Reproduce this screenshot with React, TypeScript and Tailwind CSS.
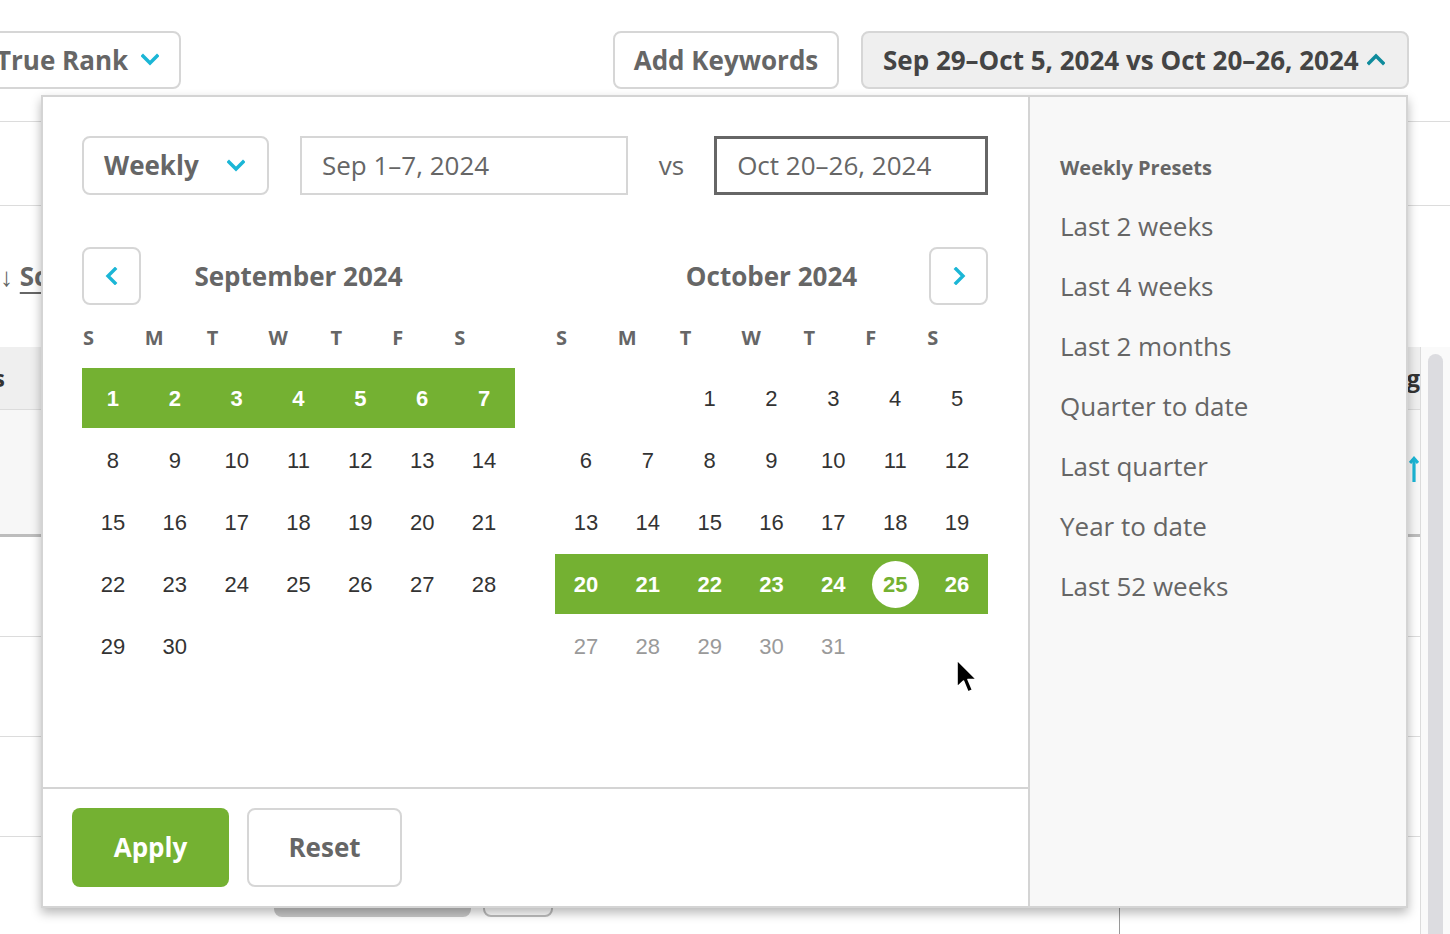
import React from "react"

type Dir = "down" | "up" | "left" | "right"

const POINTS: Record<Dir, string> = {
  down: "2,5 9,12 16,5",
  up: "2,12 9,5 16,12",
  left: "12,2 5,9 12,16",
  right: "6,2 13,9 6,16",
}

function Chevron({ dir, className }: { dir: Dir; className?: string }) {
  return (
    <svg viewBox="0 0 18 18" className={className} fill="none" stroke="currentColor" strokeWidth={3.4} strokeLinecap="square">
      <polyline points={POINTS[dir]} />
    </svg>
  )
}

const DOW = ["S", "M", "T", "W", "T", "F", "S"]

function buildWeeks(offset: number, days: number) {
  const cells: (number | null)[] = []
  for (let i = 0; i < offset; i++) cells.push(null)
  for (let d = 1; d <= days; d++) cells.push(d)
  while (cells.length % 7 !== 0) cells.push(null)
  const weeks: (number | null)[][] = []
  for (let i = 0; i < cells.length; i += 7) weeks.push(cells.slice(i, i + 7))
  return weeks
}

function NavButton({ dir }: { dir: Dir }) {
  return (
    <button
      type="button"
      className="flex h-[58px] w-[59px] items-center justify-center rounded-[8px] border-2 border-[#d6d6d6] bg-white text-[#1bb6d6]"
    >
      <Chevron dir={dir} className="h-[18px] w-[18px]" />
    </button>
  )
}

function Month({
  title,
  offset,
  days,
  selected,
  today,
  fadedRow,
  nav,
}: {
  title: string
  offset: number
  days: number
  selected: number
  today?: number
  fadedRow?: number
  nav: "left" | "right"
}) {
  const weeks = buildWeeks(offset, days)
  return (
    <div className="w-[433px]">
      <div className="grid h-[58px] grid-cols-[59px_1fr_59px] items-center">
        {nav === "left" ? <NavButton dir="left" /> : <span />}
        <h3 className="text-center text-[26px] font-bold text-[#666]">{title}</h3>
        {nav === "right" ? <NavButton dir="right" /> : <span />}
      </div>

      <div className="grid h-[63px] grid-cols-7 items-center pt-[3px]">
        {DOW.map((d, i) => (
          <span key={i} className="pl-px text-[20px] font-bold text-[#666]">
            {d}
          </span>
        ))}
      </div>

      {weeks.map((week, r) => (
        <div
          key={r}
          className={r === selected ? "mb-[2px] grid h-[60px] grid-cols-7 bg-[#74b132]" : "mb-[2px] grid h-[60px] grid-cols-7"}
        >
          {week.map((d, i) => {
            if (d === null) return <span key={i} />
            if (r === selected && d === today) {
              return (
                <span key={i} className="flex items-center justify-center">
                  <span className="flex h-[47px] w-[47px] items-center justify-center rounded-full bg-white font-['Liberation_Sans',Arial,sans-serif] text-[22px] font-bold text-[#74b132]">
                    {d}
                  </span>
                </span>
              )
            }
            return (
              <span
                key={i}
                className={
                  r === selected
                    ? "flex items-center justify-center font-['Liberation_Sans',Arial,sans-serif] text-[22px] font-bold text-white"
                    : r === fadedRow
                      ? "flex items-center justify-center font-['Liberation_Sans',Arial,sans-serif] text-[22px] text-[#9a9a9a]"
                      : "flex items-center justify-center font-['Liberation_Sans',Arial,sans-serif] text-[22px] text-[#333]"
                }
              >
                {d}
              </span>
            )
          })}
        </div>
      ))}
    </div>
  )
}

const PRESETS = ["Last 2 weeks", "Last 4 weeks", "Last 2 months", "Quarter to date", "Last quarter", "Year to date", "Last 52 weeks"]

function DatePopup() {
  return (
    <div className="absolute left-[41px] top-[95px] flex h-[813px] w-[1367px] border-2 border-[#d4d4d4] bg-white shadow-[0_5px_10px_rgba(0,0,0,0.28)]">
      {/* calendars */}
      <div className="flex w-[985px] flex-col">
        <div className="flex-1 pl-[39px] pr-[40px] pt-[39px]">
          <div className="flex h-[59px] items-center">
            <button
              type="button"
              className="flex h-[59px] w-[187px] items-center justify-between rounded-[8px] border-2 border-[#d6d6d6] pl-[20px] pr-[22px] text-[26px] font-bold text-[#666]"
            >
              Weekly
              <Chevron dir="down" className="h-[18px] w-[18px] text-[#1bb6d6]" />
            </button>
            <div className="ml-[31px] flex h-[59px] w-[328px] items-center border-2 border-[#d6d6d6] pl-[20px] text-[26px] text-[#666]">
              Sep 1–7, 2024
            </div>
            <span className="ml-[31px] text-[26px] text-[#666]">vs</span>
            <div className="ml-[30px] flex h-[59px] w-[274px] items-center border-[3px] border-[#666] pl-[20px] text-[26px] text-[#666]">
              Oct 20–26, 2024
            </div>
          </div>

          <div className="mt-[52px] flex gap-[40px]">
            <Month title="September 2024" offset={0} days={30} selected={0} nav="left" />
            <Month title="October 2024" offset={2} days={31} selected={3} today={25} fadedRow={4} nav="right" />
          </div>
        </div>

        <div className="flex h-[119px] items-center gap-[18px] border-t-2 border-[#d4d4d4] pl-[29px]">
          <button type="button" className="h-[79px] w-[157px] rounded-[8px] bg-[#74b132] text-[26px] font-bold text-white">
            Apply
          </button>
          <button
            type="button"
            className="h-[79px] w-[155px] rounded-[8px] border-2 border-[#d6d6d6] bg-white text-[26px] font-bold text-[#666]"
          >
            Reset
          </button>
        </div>
      </div>

      {/* presets */}
      <div className="flex-1 border-l-2 border-[#d4d4d4] bg-[#f8f8f8] pl-[30px] pt-[56px]">
        <h4 className="h-[30px] text-[20px] font-bold leading-[30px] text-[#666]">Weekly Presets</h4>
        <ul className="mt-[13px]">
          {PRESETS.map((p) => (
            <li key={p} className="text-[26px] leading-[60px] text-[#666]">
              {p}
            </li>
          ))}
        </ul>
      </div>
    </div>
  )
}

function Cursor() {
  return (
    <svg className="absolute left-[955px] top-[659px] h-[38px] w-[26px]" viewBox="0 0 26 38">
      <path
        d="M2 1 L2 28 L8.5 22 L13 33 L17.5 31 L13 20.5 L21.5 20.5 Z"
        fill="#000"
        stroke="#fff"
        strokeWidth={1.6}
        strokeLinejoin="round"
      />
    </svg>
  )
}

export default function App() {
  return (
    <div className="relative h-[934px] w-[1450px] overflow-hidden bg-white font-['Open_Sans',sans-serif]">
      {/* toolbar */}
      <div className="flex h-[122px] items-start justify-between border-b border-[#dcdcdc] pr-[41px] pt-[31px]">
        <button
          type="button"
          className="-ml-[26px] flex h-[58px] items-center gap-[13px] rounded-[8px] border-2 border-[#d6d6d6] pl-[20px] pr-[20px] text-[26px] font-bold text-[#666]"
        >
          True Rank
          <Chevron dir="down" className="h-[18px] w-[18px] text-[#1bb6d6]" />
        </button>
        <div className="flex gap-[22px]">
          <button
            type="button"
            className="flex h-[58px] w-[226px] items-center justify-center rounded-[8px] border-2 border-[#d6d6d6] text-[26px] font-bold text-[#666]"
          >
            Add Keywords
          </button>
          <button
            type="button"
            className="flex h-[58px] w-[548px] items-center justify-between rounded-[8px] border-2 border-[#d6d6d6] bg-[#efefef] pl-[20px] pr-[22px] text-[26px] font-bold text-[#444]"
          >
            Sep 29–Oct 5, 2024 vs Oct 20–26, 2024
            <Chevron dir="up" className="h-[18px] w-[18px] text-[#0f8b9c]" />
          </button>
        </div>
      </div>

      <div className="h-[84px] border-b border-[#dcdcdc]" />

      <div className="flex h-[141px] items-center">
        <span className="ml-0 text-[26px] font-bold text-[#666]">
          ↓ <span className="underline decoration-2 underline-offset-[6px]">Score</span>
        </span>
      </div>

      {/* table */}
      <div className="flex">
        <div className="flex-1">
          <div className="flex h-[63px] items-center justify-between border-b border-[#dcdcdc] bg-[#efefef] text-[24px] font-bold text-[#333]">
            <span className="-ml-[145px] w-[150px] shrink-0 whitespace-nowrap text-right">Keywords</span>
            <span>Avg</span>
          </div>
          <div className="flex h-[127px] items-center justify-end border-b-[3px] border-[#bdbdbd] bg-[#f7f7f7] pb-[6px] pr-[1px] text-[#1bb6d6]">
            <svg viewBox="0 0 10 26" className="h-[26px] w-[10px]" fill="none" stroke="currentColor" strokeWidth={3.2}>
              <line x1="5" y1="3" x2="5" y2="26" />
              <polyline points="1,7 5,2.5 9,7" />
            </svg>
          </div>
          <div className="h-[100px] border-b border-[#dcdcdc]" />
          <div className="h-[100px] border-b border-[#dcdcdc]" />
          <div className="h-[100px] border-b border-[#dcdcdc]" />
          <div className="flex h-[100px]">
            <div className="flex w-[1120px] items-end gap-[12px] border-r border-[#999] pb-[20px] pl-[274px]">
              <span className="h-[40px] w-[197px] rounded-[8px] bg-[#c8c8c8]" />
              <span className="h-[40px] w-[70px] rounded-[8px] border-2 border-[#bdbdbd]" />
            </div>
          </div>
        </div>
        <div className="w-[30px] border-l border-[#dcdcdc] bg-[#fafafa] pl-[7px] pt-[7px]">
          <div className="h-[700px] w-[15px] rounded-full bg-[#dcdce0]" />
        </div>
      </div>

      <DatePopup />
      <Cursor />
    </div>
  )
}
